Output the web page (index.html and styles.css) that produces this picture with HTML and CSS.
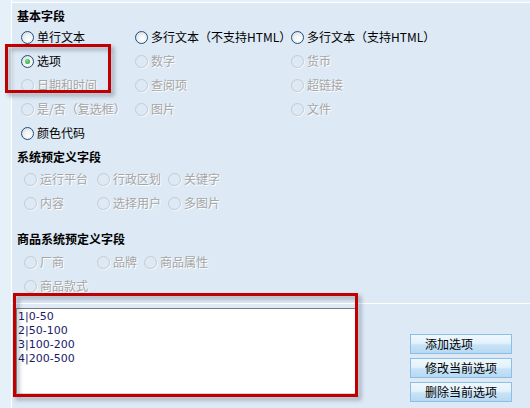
FILE: index.html
```html
<!DOCTYPE html>
<html lang="zh">
<head>
<meta charset="utf-8">
<link rel="stylesheet" href="styles.css">
</head>
<body>
<div class="page">
  <div class="side"></div>
  <div class="main">
    <div class="topband"></div>
    <div class="fields">
      <div class="heading h1">基本字段</div>
      <div class="grid g1">
        <label class="opt"><span class="radio"></span>单行文本</label>
        <label class="opt"><span class="radio"></span>多行文本（不支持HTML）</label>
        <label class="opt"><span class="radio"></span>多行文本（支持HTML）</label>
        <label class="opt"><span class="radio checked"></span>选项</label>
        <label class="opt dis"><span class="radio"></span>数字</label>
        <label class="opt dis"><span class="radio"></span>货币</label>
        <label class="opt dis"><span class="radio"></span>日期和时间</label>
        <label class="opt dis"><span class="radio"></span>查阅项</label>
        <label class="opt dis"><span class="radio"></span>超链接</label>
        <label class="opt dis"><span class="radio"></span>是/否（复选框）</label>
        <label class="opt dis"><span class="radio"></span>图片</label>
        <label class="opt dis"><span class="radio"></span>文件</label>
        <label class="opt"><span class="radio"></span>颜色代码</label>
      </div>
      <div class="heading h2">系统预定义字段</div>
      <div class="grid g2">
        <label class="opt dis"><span class="radio"></span>运行平台</label>
        <label class="opt dis"><span class="radio"></span>行政区划</label>
        <label class="opt dis"><span class="radio"></span>关键字</label>
        <label class="opt dis"><span class="radio"></span>内容</label>
        <label class="opt dis"><span class="radio"></span>选择用户</label>
        <label class="opt dis"><span class="radio"></span>多图片</label>
      </div>
      <div class="heading h3">商品系统预定义字段</div>
      <div class="grid g3">
        <label class="opt dis"><span class="radio"></span>厂商</label>
        <label class="opt dis"><span class="radio"></span>品牌</label>
        <label class="opt dis"><span class="radio"></span>商品属性</label>
        <label class="opt dis"><span class="radio"></span>商品款式</label>
      </div>
    </div>
    <div class="bottom">
      <div class="textarea">1|0-50<br>2|50-100<br>3|100-200<br>4|200-500</div>
      <div class="buttons">
        <button class="btn">添加选项</button>
        <button class="btn">修改当前选项</button>
        <button class="btn">删除当前选项</button>
      </div>
    </div>
  </div>
</div>
<div class="mark mark1"></div>
<div class="mark mark2"></div>
</body>
</html>
```
FILE: styles.css
```css
html, body {
  margin: 0;
  padding: 0;
}
body {
  width: 530px;
  height: 408px;
  overflow: hidden;
  background: #dde9f5;
  font-family: "Noto Sans CJK SC", "DejaVu Sans", sans-serif;
  font-size: 12px;
  color: #000;
  position: relative;
}
.page {
  display: flex;
  height: 408px;
}
.side {
  width: 11px;
  background: #e6f0f9;
  border-right: 1px solid #ffffff;
}
.main {
  flex: 1;
  display: flex;
  flex-direction: column;
}
.topband {
  height: 2px;
  background: #e6f0f9;
  border-bottom: 1px solid #ffffff;
}
.fields {
  height: 300px;
  padding-left: 5px;
}
.heading {
  font-weight: bold;
  line-height: 16px;
  height: 16px;
}
.h1 { margin-top: 5px; margin-bottom: 1px; }
.h2 { margin-top: 4px; margin-bottom: 2px; }
.h3 { margin-top: 16px; margin-bottom: 3px; }
.grid {
  display: grid;
  grid-auto-rows: 24px;
}
.g1 {
  padding-left: 4px;
  grid-template-columns: 114px 156px auto;
}
.g2 {
  padding-left: 7px;
  grid-template-columns: 73px 71px auto;
}
.g3 {
  padding-left: 7px;
  grid-template-columns: 73px 47px auto;
}
.opt {
  display: flex;
  align-items: center;
  gap: 3px;
  white-space: nowrap;
  line-height: 16px;
}
.radio {
  width: 11px;
  height: 11px;
  border-radius: 50%;
  border: 1px solid #1f4f7d;
  background: radial-gradient(circle at 60% 65%, #ffffff 0%, #f2f4f6 40%, #c9d1da 100%);
  flex: none;
  position: relative;
}
.radio.checked::after {
  content: "";
  position: absolute;
  left: 3px;
  top: 3px;
  width: 5px;
  height: 5px;
  border-radius: 50%;
  background: radial-gradient(circle at 40% 40%, #7fe07f, #1e9a1e);
}
.dis {
  color: #a6a6a6;
  text-shadow: 1px 1px 0 #ffffff;
}
.dis .radio {
  border-color: #c6cbd0;
  background: transparent;
  box-shadow: 1px 1px 0 rgba(255,255,255,0.6);
}
.bottom {
  flex: 1;
  border-top: 1px solid #ffffff;
  display: flex;
  align-items: flex-start;
  padding-left: 4px;
}
.textarea {
  margin-top: 4px;
  width: 337px;
  height: 83px;
  background: #ffffff;
  border: 1px solid;
  border-color: #7c7c7c #e6e6e6 #d8d8d8 #8a8a8a;
  padding: 1px 0 0 1px;
  font-family: "DejaVu Sans", sans-serif;
  font-size: 11px;
  line-height: 14px;
  color: #1a1a66;
}
.buttons {
  margin-left: auto;
  margin-right: 18px;
  margin-top: 30px;
  display: flex;
  flex-direction: column;
  gap: 4px;
}
.btn {
  width: 102px;
  height: 20px;
  margin: 0;
  padding: 0 0 0 14px;
  text-align: left;
  font-family: "Noto Sans CJK SC", sans-serif;
  font-size: 12px;
  line-height: 18px;
  color: #000;
  border: 1px solid #8cbfe6;
  background: linear-gradient(#eef8fd 0%, #e4f2fb 45%, #c8e3f6 55%, #b6d9f2 100%);
}
.mark {
  position: absolute;
  border: 3px solid #c00000;
  filter: drop-shadow(3px 3px 2px rgba(40, 50, 70, 0.4));
  box-sizing: border-box;
}
.mark1 {
  left: 5px;
  top: 44px;
  width: 106px;
  height: 49px;
}
.mark2 {
  left: 13px;
  top: 293px;
  width: 345px;
  height: 104px;
}
```
